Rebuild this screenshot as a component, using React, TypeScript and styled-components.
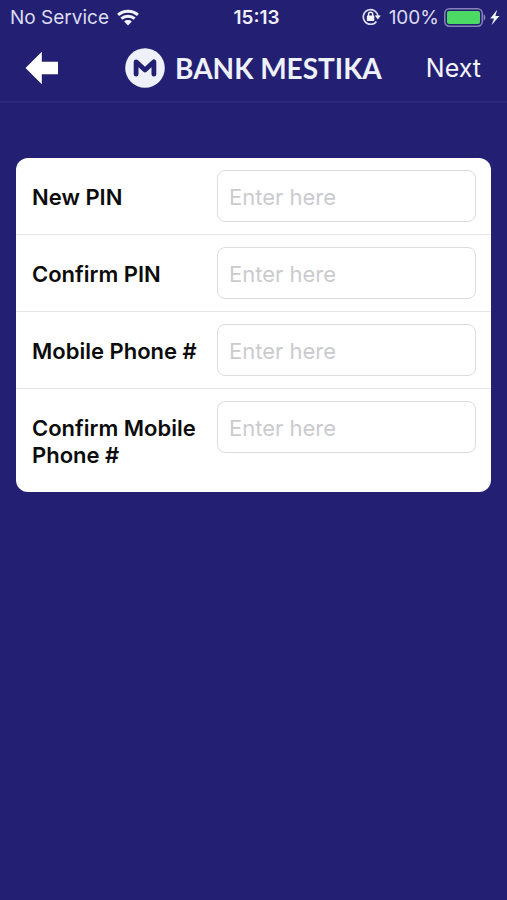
import React from 'react';
import styled, { createGlobalStyle } from 'styled-components';

const GlobalStyle = createGlobalStyle`
  *, *::before, *::after { box-sizing: border-box; }
  body {
    margin: 0;
    background: #232073;
    font-family: Inter, "Liberation Sans", sans-serif;
  }
`;

const Screen = styled.div`
  min-height: 100vh;
  background: #232073;
  color: #f4f4fc;
`;

const StatusBar = styled.div`
  display: grid;
  grid-template-columns: 1fr auto 1fr;
  align-items: center;
  height: 34px;
  padding: 0 4px 0 10px;
  font-size: 19px;
  line-height: 24px;
  color: #dcdcf2;
`;

const StatusGroup = styled.div<{ $end?: boolean }>`
  display: flex;
  align-items: center;
  justify-content: ${(p) => (p.$end ? 'flex-end' : 'flex-start')};
  white-space: nowrap;
`;

const StatusText = styled.span<{ $strong?: boolean }>`
  padding-top: 2px;
  font-weight: ${(p) => (p.$strong ? 600 : 400)};
  color: ${(p) => (p.$strong ? '#f0f0fc' : 'inherit')};
`;

const Carrier = styled(StatusText)`
  margin-right: 8px;
`;

const Charge = styled(StatusText)`
  margin: 0 5px 0 8px;
`;

const NavBar = styled.header`
  display: flex;
  align-items: center;
  justify-content: space-between;
  height: 69px;
  padding: 0 26px 0 25px;
  border-bottom: 2px solid #2d2a7e;
`;

const NavButton = styled.button`
  display: flex;
  align-items: center;
  padding: 0;
  border: 0;
  background: none;
  color: #f4f4fc;
  font: 400 25px/32px Inter, "Liberation Sans", sans-serif;
  cursor: pointer;
`;

const Brand = styled.h1`
  display: flex;
  align-items: center;
  gap: 10px;
  margin: 0;
  padding-left: 22px;
  color: #eef1fa;
  font: 700 28px/40px Lato, "Liberation Sans", sans-serif;
  white-space: nowrap;
`;

const Card = styled.form`
  margin: 55px 16px 0;
  overflow: hidden;
  border-radius: 12px;
  background: #fff;
`;

const Row = styled.div`
  display: grid;
  grid-template-columns: 169px 1fr;
  gap: 16px;
  align-items: start;
  padding: 12px 15px 12px 16px;

  & + & {
    border-top: 1px solid #e6e6e6;
  }
`;

const Label = styled.label`
  padding: 14px 0 11px;
  color: #0c0c0c;
  font-size: 22px;
  font-weight: 600;
  line-height: 27px;
`;

const Field = styled.input`
  width: 100%;
  height: 52px;
  padding: 2px 11px 0;
  border: 1px solid #dcdcde;
  border-radius: 8px;
  background: #fff;
  color: #0c0c0c;
  font: 400 22px/28px Inter, "Liberation Sans", sans-serif;

  &::placeholder {
    color: #cbcbcf;
    opacity: 1;
  }
`;

const WifiIcon = () => (
  <svg width="22" height="17" viewBox="0 0 22 17" fill="none" aria-hidden="true">
    <path d="M1.1 5.9C6.6.9 15.4.9 20.9 5.9" stroke="#f4f4fc" strokeWidth="3" />
    <path d="M4.4 9.6c3.6-3.3 9.6-3.3 13.2 0" stroke="#f4f4fc" strokeWidth="3" />
    <path d="M7.2 12.5c2.2-1.9 5.4-1.9 7.6 0L11 16.4Z" fill="#f4f4fc" />
  </svg>
);

const RotationLockIcon = () => (
  <svg width="19" height="18" viewBox="0 0 19 18" fill="none" aria-hidden="true">
    <path d="M15.9 8.6A7.3 7.3 0 1 0 14.4 13.4" stroke="#dcdcf2" strokeWidth="1.7" />
    <path d="M12.8 7.6h6l-3 3.8Z" fill="#f4f4fc" />
    <rect x="4.9" y="7.6" width="7.4" height="5.4" rx=".8" fill="#f4f4fc" />
    <path d="M6.5 8V6.4a2.1 2.1 0 0 1 4.2 0V8" stroke="#f4f4fc" strokeWidth="1.4" />
  </svg>
);

const BatteryIcon = () => (
  <svg width="42" height="19" viewBox="0 0 42 19" aria-hidden="true">
    <rect x=".8" y=".8" width="37.4" height="17.4" rx="4.6" fill="none" stroke="#8583b5" strokeWidth="1.5" />
    <rect x="3" y="3" width="33" height="13" rx="2" fill="#4cd964" />
    <path d="M39.6 6.3c2.4.8 2.4 5.6 0 6.4Z" fill="#8583b5" />
  </svg>
);

const BoltIcon = () => (
  <svg width="17" height="17" viewBox="0 0 17 17" aria-hidden="true">
    <path d="M11.2.8 4.2 9.6h3.9L5.4 16.2l8-9.2H9.4Z" fill="#f4f4fc" />
  </svg>
);

const BackArrow = () => (
  <svg width="34" height="34" viewBox="0 0 34 34" aria-hidden="true">
    <path d="M.5 17 16.8.8v9.9H33v12.6H16.8v9.9Z" fill="#fff" />
  </svg>
);

const BrandMark = () => (
  <svg width="40" height="40" viewBox="0 0 40 40" fill="none" aria-hidden="true">
    <circle cx="20" cy="20" r="19.8" fill="#eef1fa" />
    <path
      d="M11.1 26.2V13.8L20 22l8.9-8.2v12.4"
      stroke="#232073"
      strokeWidth="4.8"
      strokeLinecap="round"
      strokeLinejoin="round"
    />
  </svg>
);

const fields = [
  { id: 'new-pin', label: 'New PIN', type: 'password' },
  { id: 'confirm-pin', label: 'Confirm PIN', type: 'password' },
  { id: 'mobile', label: 'Mobile Phone #', type: 'tel' },
  { id: 'confirm-mobile', label: 'Confirm Mobile Phone #', type: 'tel' },
];

export default function App() {
  return (
    <Screen>
      <GlobalStyle />
      <StatusBar>
        <StatusGroup>
          <Carrier>No Service</Carrier>
          <WifiIcon />
        </StatusGroup>
        <StatusText $strong>15:13</StatusText>
        <StatusGroup $end>
          <RotationLockIcon />
          <Charge>100%</Charge>
          <BatteryIcon />
          <BoltIcon />
        </StatusGroup>
      </StatusBar>
      <NavBar>
        <NavButton type="button" aria-label="Back">
          <BackArrow />
        </NavButton>
        <Brand>
          <BrandMark />
          BANK MESTIKA
        </Brand>
        <NavButton type="submit" form="pin-form">
          Next
        </NavButton>
      </NavBar>
      <main>
        <Card id="pin-form" onSubmit={(e) => e.preventDefault()}>
          {fields.map((f) => (
            <Row key={f.id}>
              <Label htmlFor={f.id}>{f.label}</Label>
              <Field id={f.id} type={f.type} placeholder="Enter here" />
            </Row>
          ))}
        </Card>
      </main>
    </Screen>
  );
}
